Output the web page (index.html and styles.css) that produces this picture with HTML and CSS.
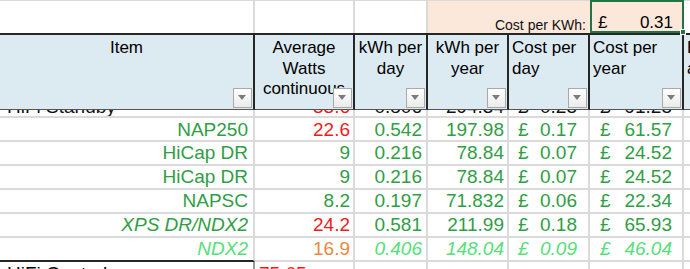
FILE: index.html
```html
<!DOCTYPE html>
<html lang="en">
<head>
    <meta charset="UTF-8">
    <meta name="viewport" content="width=device-width, initial-scale=1.0">
    <title>Hi-Fi power costs</title>
    <link rel="stylesheet" href="styles.css">
</head>
<body>
    <div class="sheet">
        <!-- rate row -->
        <div class="row row-top">
            <div class="cell"></div>
            <div class="cell"></div>
            <div class="cell"></div>
            <div class="cell rate-label">Cost per KWh:</div>
            <div class="cell rate-value"><span>£</span><span>0.31</span><i class="handle"></i></div>
            <div class="cell"></div>
        </div>

        <!-- header -->
        <div class="row row-head">
            <div class="hcell center">Item<span class="filter"></span></div>
            <div class="hcell center">Average<br>Watts<br>continuous<span class="filter"></span></div>
            <div class="hcell center">kWh per<br>day<span class="filter"></span></div>
            <div class="hcell center">kWh per<br>year<span class="filter"></span></div>
            <div class="hcell">Cost per<br>day<span class="filter"></span></div>
            <div class="hcell">Cost per<br>year<span class="filter"></span></div>
            <div class="hcell">Est.<br>annual</div>
        </div>

        <!-- row scrolled under the frozen header -->
        <div class="row row-peek">
            <div class="cell left">HiFi Standby</div>
            <div class="cell num red">33.6</div>
            <div class="cell num">0.806</div>
            <div class="cell num">294.34</div>
            <div class="cell money day"><span>£</span><span>0.25</span></div>
            <div class="cell money year"><span>£</span><span>91.25</span></div>
            <div class="cell"></div>
        </div>

        <div class="row row-first green">
            <div class="cell num">NAP250</div>
            <div class="cell num red">22.6</div>
            <div class="cell num">0.542</div>
            <div class="cell num">197.98</div>
            <div class="cell money day"><span>£</span><span>0.17</span></div>
            <div class="cell money year"><span>£</span><span>61.57</span></div>
            <div class="cell"></div>
        </div>

        <div class="row green">
            <div class="cell num">HiCap DR</div>
            <div class="cell num">9</div>
            <div class="cell num">0.216</div>
            <div class="cell num">78.84</div>
            <div class="cell money day"><span>£</span><span>0.07</span></div>
            <div class="cell money year"><span>£</span><span>24.52</span></div>
            <div class="cell"></div>
        </div>

        <div class="row green">
            <div class="cell num">HiCap DR</div>
            <div class="cell num">9</div>
            <div class="cell num">0.216</div>
            <div class="cell num">78.84</div>
            <div class="cell money day"><span>£</span><span>0.07</span></div>
            <div class="cell money year"><span>£</span><span>24.52</span></div>
            <div class="cell"></div>
        </div>

        <div class="row green">
            <div class="cell num">NAPSC</div>
            <div class="cell num">8.2</div>
            <div class="cell num">0.197</div>
            <div class="cell num">71.832</div>
            <div class="cell money day"><span>£</span><span>0.06</span></div>
            <div class="cell money year"><span>£</span><span>22.34</span></div>
            <div class="cell"></div>
        </div>

        <div class="row green">
            <div class="cell num italic">XPS DR/NDX2</div>
            <div class="cell num red">24.2</div>
            <div class="cell num">0.581</div>
            <div class="cell num">211.99</div>
            <div class="cell money day"><span>£</span><span>0.18</span></div>
            <div class="cell money year"><span>£</span><span>65.93</span></div>
            <div class="cell"></div>
        </div>

        <div class="row light italic">
            <div class="cell num total-edge">NDX2</div>
            <div class="cell num orange">16.9</div>
            <div class="cell num">0.406</div>
            <div class="cell num">148.04</div>
            <div class="cell money day"><span>£</span><span>0.09</span></div>
            <div class="cell money year"><span>£</span><span>46.04</span></div>
            <div class="cell"></div>
        </div>

        <div class="row row-total">
            <div class="cell left">HiFi Control</div>
            <div class="cell left red">75.65</div>
            <div class="cell"></div>
            <div class="cell"></div>
            <div class="cell"></div>
            <div class="cell"></div>
            <div class="cell"></div>
        </div>
    </div>
</body>
</html>
```

FILE: styles.css
```css
:root{
    --grid: #dadada;
    --head-line: #262626;
    --head-bg: #dceaf1;
    --peach: #fbe8da;
    --green: #2f9e44;
    --green-light: #55e07a;
    --red: #f01c1c;
    --orange: #ea8a3f;
    --select: #227447;

    --font-f: 'Liberation Sans', Arial, sans-serif;
}

*{
    margin: 0px;
    padding: 0px;
    box-sizing: border-box;
}

body{
    background-color: white;
    font-family: var(--font-f);
    color: #111;
    overflow: hidden;
}

.sheet{
    width: 690px;
}

.row{
    display: grid;
    grid-template-columns: 255px 100px 73px 81px 81px 94px 1fr;
}

.cell{
    border-right: 2px solid var(--grid);
    border-bottom: 2px solid var(--grid);
    overflow: hidden;
    white-space: nowrap;
    font-size: 19px;
    line-height: 22px;
}

.num{
    text-align: right;
}
.left{
    text-align: left;
    padding-left: 7px;
}

.row .cell:nth-child(1).num{ padding-right: 5px; }
.row .cell:nth-child(2).num{ padding-right: 3px; }
.row .cell:nth-child(3).num{ padding-right: 4px; }
.row .cell:nth-child(4).num{ padding-right: 3px; }
.row-total .cell:nth-child(2){ padding-left: 4px; }

.money{
    display: flex;
    justify-content: space-between;
}
.money.day{
    padding-left: 9px;
    padding-right: 11px;
}
.money.year{
    padding-left: 10px;
    padding-right: 10px;
}

.green .cell{ color: var(--green); }
.light .cell{ color: var(--green-light); }
.italic{ font-style: italic; }
.row .cell.red{ color: var(--red); }
.row .cell.orange{ color: var(--orange); font-style: normal; }

/* rate row */
.row-top{
    height: 33px;
}
.row-top .cell{
    border-bottom: none;
    border-top: 1px solid var(--grid);
}
.rate-label{
    grid-column: 4 / span 2;
    background-color: var(--peach);
    display: flex;
    justify-content: flex-end;
    align-items: flex-end;
    font-size: 14px;
    line-height: 16px;
    padding-right: 4px;
}
.row-top .cell.rate-label{
    border-right: none;
}
.row-top .cell.rate-value{
    position: relative;
    z-index: 2;
    overflow: visible;
    display: flex;
    justify-content: space-between;
    align-items: flex-end;
    background-color: var(--peach);
    border: 2px solid var(--select);
    font-size: 17px;
    line-height: 16px;
    padding-left: 6px;
    padding-right: 9px;
    color: #000;
}
.handle{
    position: absolute;
    right: -4px;
    bottom: -4px;
    width: 6px;
    height: 6px;
    background-color: var(--select);
    border: 1px solid white;
}

/* header */
.row-head{
    height: 77px;
    border-top: 2px solid var(--head-line);
}
.hcell{
    position: relative;
    background-color: var(--head-bg);
    border-right: 2px solid var(--head-line);
    border-bottom: 1px solid #555;
    padding: 3px 0px 0px 3px;
    font-size: 17px;
    line-height: 20.5px;
    color: #000;
    overflow: hidden;
    white-space: nowrap;
}
.hcell.center{
    text-align: center;
    padding-left: 0px;
}
.row > .cell:last-child,
.row > .hcell:last-child{
    border-right: none;
}
.filter{
    position: absolute;
    right: 1px;
    bottom: 1px;
    width: 19px;
    height: 20px;
    border: 1px solid #a9a9a9;
    background: linear-gradient(#ffffff, #ebebeb);
}
.filter::after{
    content: "";
    position: absolute;
    left: 4px;
    top: 6px;
    border-left: 4.5px solid transparent;
    border-right: 4.5px solid transparent;
    border-top: 5px solid #7b7b7b;
}

/* partly hidden row */
.row-peek{
    height: 8px;
}
.row-peek .cell{
    display: flex;
    align-items: flex-end;
    line-height: 19px;
    color: #111;
}
.row-peek .cell.num{
    justify-content: flex-end;
}
.row-peek .cell.money{
    justify-content: space-between;
}

.row-first{
    height: 25px;
}
.row-first .cell{
    padding-top: 1px;
}
.green, .light{
    height: 24px;
}

.cell.total-edge{
    border-bottom-color: var(--head-line);
}

.row-total{
    height: 30px;
}
.row-total .cell{
    border-bottom: none;
    padding-top: 1px;
    color: #000;
}
.row-total .cell:first-child{
    border-right-color: #9a9a9a;
}
```
